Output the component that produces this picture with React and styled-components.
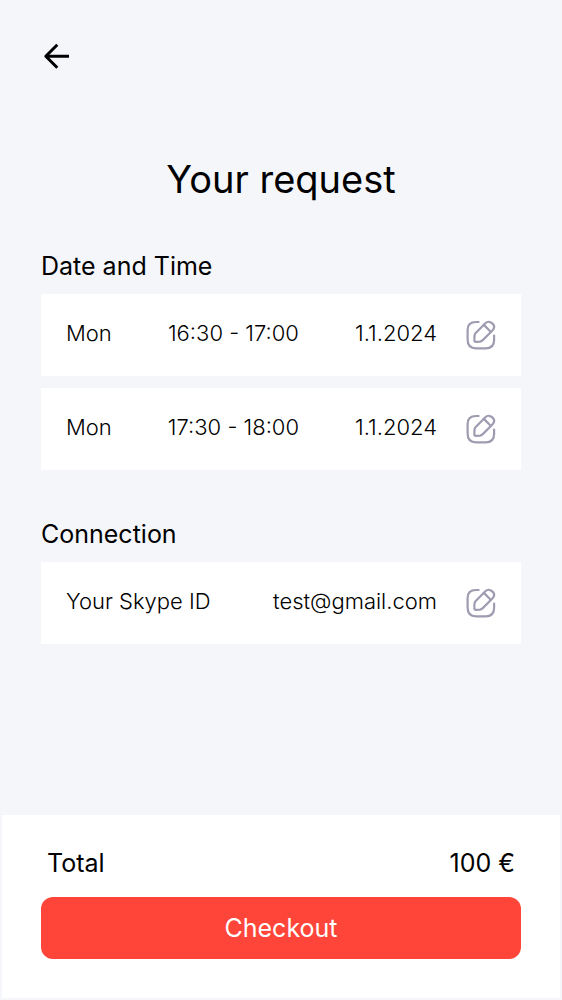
import React from "react";
import styled, { createGlobalStyle } from "styled-components";

const GlobalStyle = createGlobalStyle`
  * { box-sizing: border-box; }
  body { margin: 0; background: #f4f6fa; color: #000; font-family: Inter, "Liberation Sans", sans-serif; }
`;

const Screen = styled.div`
  display: flex;
  flex-direction: column;
  min-height: 100vh;
  padding: 0 2px 2px;
`;

const Main = styled.main`
  flex: 1;
  padding: 40px 39px 0;
`;

const IconButton = styled.button`
  display: flex;
  flex: none;
  padding: 0;
  border: 0;
  background: none;
  color: ${(p) => p.$color || "#000"};
  cursor: pointer;
`;

const Title = styled.h1`
  margin: 83px 0 47px;
  font-size: 38px;
  line-height: 48px;
  font-weight: 400;
  text-align: center;
`;

const Section = styled.section`
  display: flex;
  flex-direction: column;
  gap: 12px;
  margin-bottom: 48px;
`;

const SectionTitle = styled.h2`
  margin: 0;
  font-size: 25px;
  line-height: 32px;
  font-weight: 400;
`;

const Row = styled.div`
  display: flex;
  align-items: center;
  justify-content: space-between;
  height: 82px;
  padding: 0 24px 0 25px;
  background: #fff;
`;

const Text = styled.span`
  padding-bottom: 4px;
  font-size: 22px;
  line-height: 28px;
  font-weight: 300;
`;

const Action = styled.div`
  display: flex;
  align-items: center;
  gap: 28px;
`;

const Footer = styled.footer`
  padding: 32px 39px 39px;
  background: #fff;
`;

const Total = styled.div`
  display: flex;
  justify-content: space-between;
  padding: 0 6px;
  margin-bottom: 18px;
  font-size: 25px;
  line-height: 32px;
`;

const Checkout = styled.button`
  width: 100%;
  height: 62px;
  border: 0;
  border-radius: 12px;
  background: #ff453a;
  color: #fff;
  font: 400 25px/32px Inter, "Liberation Sans", sans-serif;
  cursor: pointer;
`;

const EditButton = ({ label }) => (
  <IconButton type="button" aria-label={label} $color="#9f9bb1">
    <svg width="32" height="32" viewBox="0 0 32 32" fill="none" stroke="currentColor" strokeWidth="2.2" strokeLinecap="round" strokeLinejoin="round">
      <path d="M13.6 3H11C5.2 3 2.6 5.5 2.6 11v9.5c0 6.2 2.5 8.8 8.4 8.8h9.6c5.9 0 8.5-2.6 8.5-8.4v-4.4" />
      <path d="M20.4 4.2 10.7 14.1c-.8.8-1.1 1.5-1.2 2.6l-.2 4.2c-.1 1.3.6 2 1.9 1.9l3.7-.2c1.1-.1 1.8-.4 2.6-1.2l9.9-9.9c2.1-2.2 2.2-4.9.2-6.9-2.1-2.1-5-2.6-7.2-.4Z" />
      <path d="m18.8 5.9 6.9 6.9" />
    </svg>
  </IconButton>
);

const slots = ["16:30 - 17:00", "17:30 - 18:00"];

export default function App() {
  return (
    <Screen>
      <GlobalStyle />
      <Main>
        <IconButton type="button" aria-label="Back">
          <svg width="32" height="32" viewBox="0 0 32 32" fill="none" stroke="currentColor" strokeWidth="3" strokeLinejoin="round">
            <path d="M28 16.3H5M16.3 4.8 4.8 16.3l11.5 11.5" />
          </svg>
        </IconButton>
        <Title>Your request</Title>
        <Section>
          <SectionTitle>Date and Time</SectionTitle>
          {slots.map((time) => (
            <Row key={time}>
              <Text>Mon</Text>
              <Text>{time}</Text>
              <Action>
                <Text>1.1.2024</Text>
                <EditButton label={`Edit ${time}`} />
              </Action>
            </Row>
          ))}
        </Section>
        <Section>
          <SectionTitle>Connection</SectionTitle>
          <Row>
            <Text>Your Skype ID</Text>
            <Action>
              <Text>test@gmail.com</Text>
              <EditButton label="Edit Skype ID" />
            </Action>
          </Row>
        </Section>
      </Main>
      <Footer>
        <Total>
          <span>Total</span>
          <span>100 €</span>
        </Total>
        <Checkout type="button">Checkout</Checkout>
      </Footer>
    </Screen>
  );
}
